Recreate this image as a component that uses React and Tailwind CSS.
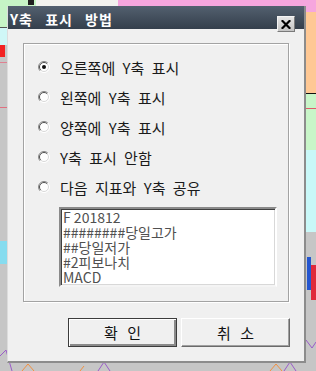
import React from "react";

const FONT = { fontFamily: '"Noto Sans CJK KR", "Noto Sans", sans-serif' };

function Radio({ checked }) {
  return (
    <svg width="12" height="12" viewBox="0 0 12 12" className="shrink-0">
      <circle cx="6" cy="6" r="5.5" fill="#ffffff" />
      <path d="M2.1 9.9 A5.5 5.5 0 0 1 9.9 2.1" stroke="#8a8a8a" strokeWidth="1" fill="none" />
      <path d="M2.8 9.2 A4.5 4.5 0 0 1 9.2 2.8" stroke="#505050" strokeWidth="1" fill="none" />
      <path d="M9.9 2.1 A5.5 5.5 0 0 1 2.1 9.9" stroke="#ffffff" strokeWidth="1" fill="none" />
      <path d="M9.2 2.8 A4.5 4.5 0 0 1 2.8 9.2" stroke="#d8d8d8" strokeWidth="1" fill="none" />
      {checked && <circle cx="6" cy="6" r="2" fill="#111" />}
    </svg>
  );
}

const options = [
  { label: "오른쪽에 Y축 표시", checked: true },
  { label: "왼쪽에 Y축 표시" },
  { label: "양쪽에 Y축 표시" },
  { label: "Y축 표시 안함" },
  { label: "다음 지표와 Y축 공유" },
];

const listItems = ["F 201812", "########당일고가", "##당일저가", "#2피보나치", "MACD"];

export default function App() {
  return (
    <div className="relative w-[316px] h-[371px] overflow-hidden bg-[#c6c6c6]" style={FONT}>
      {/* background canvas */}
      <div className="absolute left-0 top-0 w-[36px] h-[27px] bg-[#c6f4c6]" />
      <div className="absolute left-[28px] top-0 w-[6px] h-[5px] bg-[#202020]" />
      <div className="absolute left-[36px] top-0 w-[82px] h-[6px] bg-[#f3f3ef]" />
      <div className="absolute left-[118px] top-0 right-0 h-[12px] bg-[#f6a6de]" />
      <div className="absolute left-[306px] top-[12px] w-[10px] h-[81px] bg-[#ffc894]" />
      <div className="absolute left-[306px] top-[93px] w-[10px] h-[1px] bg-[#111]" />
      <div className="absolute left-[306px] top-[94px] w-[10px] h-[56px] bg-[#c8f5c8]" />
      <div className="absolute left-[306px] top-[108px] w-[10px] h-[1px] bg-[#e05a6a]" />
      <div className="absolute left-[306px] top-[150px] w-[10px] h-[82px] bg-[#c9f8f8]" />
      <div className="absolute left-[307px] top-[257px] w-[4px] h-[33px] bg-[#2456d0]" />
      <div className="absolute left-[311px] top-[265px] w-[5px] h-[35px] bg-[#e0283a]" />
      <div className="absolute left-0 top-[27px] w-[7px] h-[1px] bg-[#555]" />
      <div className="absolute left-0 top-[28px] w-[7px] h-[17px] bg-[#cff7f7]" />
      <div className="absolute left-0 top-[45px] w-[5px] h-[12px] bg-[#f22222]" />
      <div className="absolute left-0 top-[62px] w-[7px] h-[1px] bg-[#e08090]" />
      <div className="absolute left-0 top-[107px] w-[7px] h-[1px] bg-[#e07080]" />
      <div className="absolute left-0 top-[241px] w-[7px] h-[23px] bg-[#86dcef]" />
      <svg className="absolute left-0 top-[340px]" width="316" height="31" viewBox="0 0 316 31">
        <polyline points="0,16 6,10 12,31" fill="none" stroke="#9a5cc8" strokeWidth="1" />
        <polyline points="22,31 28,24 34,31" fill="none" stroke="#f09040" strokeWidth="1" />
        <polyline points="98,31 104,22 110,31" fill="none" stroke="#9a5cc8" strokeWidth="1" />
        <polyline points="80,31 84,26" fill="none" stroke="#f09040" strokeWidth="1" />
        <polyline points="270,31 276,24 282,31" fill="none" stroke="#f09040" strokeWidth="1" />
        <polyline points="284,31 290,22 296,31" fill="none" stroke="#9a5cc8" strokeWidth="1" />
        <polyline points="306,0 312,8 316,2" fill="none" stroke="#9a5cc8" strokeWidth="1" />
      </svg>

      {/* dialog window */}
      <div className="absolute left-[7px] top-[6px] w-[299px] h-[357px] flex flex-col bg-[#f0f0f0] border-l border-l-[#dcdcdc] border-r-2 border-r-[#8c8c8c] border-b-2 border-b-[#8c8c8c]">
        <div className="h-[23px] shrink-0 flex items-center pl-[2px] pt-[2px] bg-gradient-to-b from-[#53606f] to-[#343f4c]">
          <span className="text-[14px] font-bold text-white tracking-[1px] [word-spacing:8px] leading-none">
            Y축 표시 방법
          </span>
        </div>

        <button className="absolute right-[9px] top-[10px] w-[18px] h-[16px] flex items-center justify-center bg-gradient-to-b from-[#e6e6e6] to-[#c4c4c4] border border-t-[#f4f4f4] border-l-[#f4f4f4] border-r-[#7a7a7a] border-b-[#7a7a7a]">
          <svg width="10" height="9" viewBox="0 0 10 9">
            <path d="M1.5 1 L8.5 8 M8.5 1 L1.5 8" stroke="#000" strokeWidth="2.2" strokeLinecap="square" />
          </svg>
        </button>

        <div className="flex flex-col pt-[14px] pl-[15px] pr-[14px] pb-[14px]">
          <div className="w-[266px] h-[259px] flex flex-col pt-[8px] pl-[14px] border border-[#a3a3a3] shadow-[inset_1px_1px_0_#ffffff,1px_1px_0_#ffffff]">
            {options.map((o) => (
              <div key={o.label} className="h-[30px] flex items-center gap-[10px]">
                <Radio checked={o.checked} />
                <span className="text-[15px] leading-none text-[#1a1a1a] [word-spacing:4px] whitespace-nowrap">
                  {o.label}
                </span>
              </div>
            ))}
            <div className="mt-[5px] ml-[21px] w-[218px] h-[80px] overflow-hidden bg-white border-2 border-t-[#8a8a8a] border-l-[#8a8a8a] border-r-[#ffffff] border-b-[#f4f4f4] shadow-[inset_1px_1px_0_#404040,inset_-1px_-1px_0_#d8d8d8]">
              <div className="pl-[2px] flex flex-col">
                {listItems.map((t) => (
                  <div key={t} className="h-[15px] flex items-center text-[14px] leading-none text-[#505050] whitespace-nowrap">
                    {t}
                  </div>
                ))}
              </div>
            </div>
          </div>

          <div className="mt-[16px] flex justify-end gap-[4px]">
            <button className="w-[109px] h-[29px] flex items-center justify-center bg-[#f0f0f0] border border-[#3c3c3c] shadow-[inset_1px_1px_0_#ffffff,inset_-2px_-2px_0_#8a8a8a]">
              <span className="text-[15px] leading-none text-[#111] [word-spacing:6px]">확 인</span>
            </button>
            <button className="w-[109px] h-[29px] flex items-center justify-center bg-[#f0f0f0] border border-t-[#ffffff] border-l-[#ffffff] border-r-[#6a6a6a] border-b-[#6a6a6a] shadow-[inset_-1px_-1px_0_#a0a0a0]">
              <span className="text-[15px] leading-none text-[#111] [word-spacing:6px]">취 소</span>
            </button>
          </div>
        </div>
      </div>
    </div>
  );
}
